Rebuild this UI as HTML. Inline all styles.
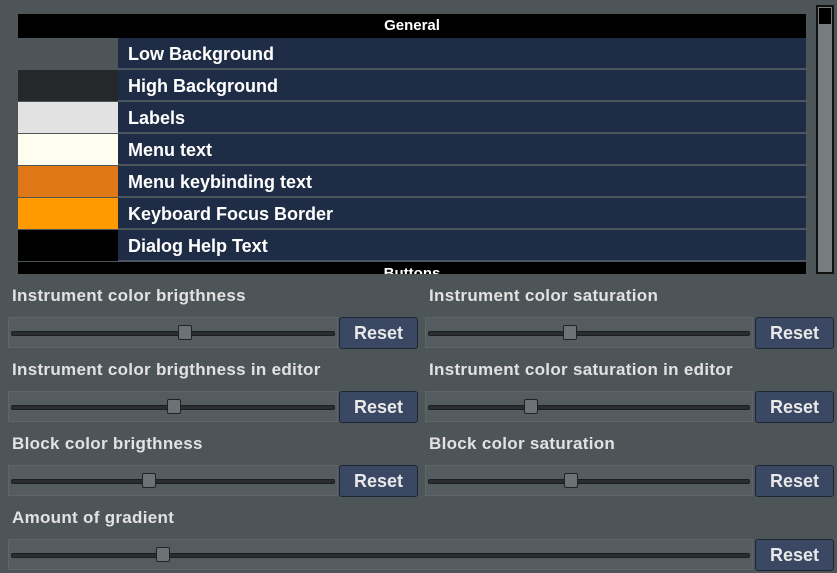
<!DOCTYPE html><html><head><style>
body{margin:0;width:837px;height:573px;background:#4e5558;font-family:"Liberation Sans",sans-serif;position:relative;overflow:hidden;color:#e4e4e4}
.a{position:absolute}
.hdr{background:#000;color:#fff;font-weight:bold;font-size:15px;text-align:center}
.sw{left:18px;width:100px;height:31px}
.rw{left:118px;width:688px;height:31px;background:#1f2c45;color:#fff;font-weight:bold;font-size:18px;line-height:33px;padding-left:10px;box-sizing:border-box;border-bottom:1px solid #4a5563}
.lb{font-weight:bold;font-size:17px;letter-spacing:0.3px;color:#e2e2e2}
.sl{height:31px;background:#555c5f;border:1px solid #5f6669;box-sizing:border-box}
.gr{position:absolute;left:2px;right:2px;top:13px;height:3px;background:#2a2e30;border:1px solid #1c1f20;border-radius:2px}
.hd{position:absolute;top:7px;width:12px;height:13px;background:#6c7376;border:1px solid #222;border-radius:2px}
.bt{width:79px;height:32px;background:#3a4864;border:1px solid #1e2636;border-radius:3px;box-sizing:border-box;color:#e8e8e8;font-weight:bold;font-size:18px;text-align:center;line-height:30px}
</style></head><body>
<div class="a hdr" style="left:18px;top:14px;width:788px;height:24px;line-height:24px">General</div>
<div class="a sw" style="top:38px;background:#4e5558"></div>
<div class="a sw" style="top:70px;background:#24282a"></div>
<div class="a sw" style="top:102px;background:#e2e2e2"></div>
<div class="a sw" style="top:134px;background:#fffdef"></div>
<div class="a sw" style="top:166px;background:#e07818"></div>
<div class="a sw" style="top:198px;background:#ff9a00"></div>
<div class="a sw" style="top:230px;background:#000"></div>
<div class="a rw" style="top:38px">Low Background</div>
<div class="a rw" style="top:70px">High Background</div>
<div class="a rw" style="top:102px">Labels</div>
<div class="a rw" style="top:134px">Menu text</div>
<div class="a rw" style="top:166px">Menu keybinding text</div>
<div class="a rw" style="top:198px">Keyboard Focus Border</div>
<div class="a rw" style="top:230px">Dialog Help Text</div>
<div class="a hdr" style="left:18px;top:262px;width:788px;height:12px;line-height:24px;overflow:hidden">Buttons</div>
<div class="a" style="left:816px;top:5px;width:18px;height:269px;border:2px solid #111;box-sizing:border-box;background:#777d7f"><div style="height:16px;background:#000;border:1px solid #777d7f"></div></div>

<div class="a lb" style="left:12px;top:286px">Instrument color brigthness</div>
<div class="a lb" style="left:429px;top:286px">Instrument color saturation</div>
<div class="a sl" style="left:8px;top:317px;width:330px"><div class="gr"></div><div class="hd" style="left:169px"></div></div>
<div class="a bt" style="left:339px;top:317px">Reset</div>
<div class="a sl" style="left:425px;top:317px;width:328px"><div class="gr"></div><div class="hd" style="left:137px"></div></div>
<div class="a bt" style="left:755px;top:317px">Reset</div>

<div class="a lb" style="left:12px;top:360px">Instrument color brigthness in editor</div>
<div class="a lb" style="left:429px;top:360px">Instrument color saturation in editor</div>
<div class="a sl" style="left:8px;top:391px;width:330px"><div class="gr"></div><div class="hd" style="left:158px"></div></div>
<div class="a bt" style="left:339px;top:391px">Reset</div>
<div class="a sl" style="left:425px;top:391px;width:328px"><div class="gr"></div><div class="hd" style="left:98px"></div></div>
<div class="a bt" style="left:755px;top:391px">Reset</div>

<div class="a lb" style="left:12px;top:434px">Block color brigthness</div>
<div class="a lb" style="left:429px;top:434px">Block color saturation</div>
<div class="a sl" style="left:8px;top:465px;width:330px"><div class="gr"></div><div class="hd" style="left:133px"></div></div>
<div class="a bt" style="left:339px;top:465px">Reset</div>
<div class="a sl" style="left:425px;top:465px;width:328px"><div class="gr"></div><div class="hd" style="left:138px"></div></div>
<div class="a bt" style="left:755px;top:465px">Reset</div>

<div class="a lb" style="left:12px;top:508px">Amount of gradient</div>
<div class="a sl" style="left:8px;top:539px;width:745px"><div class="gr"></div><div class="hd" style="left:147px"></div></div>
<div class="a bt" style="left:755px;top:539px">Reset</div>
</body></html>
